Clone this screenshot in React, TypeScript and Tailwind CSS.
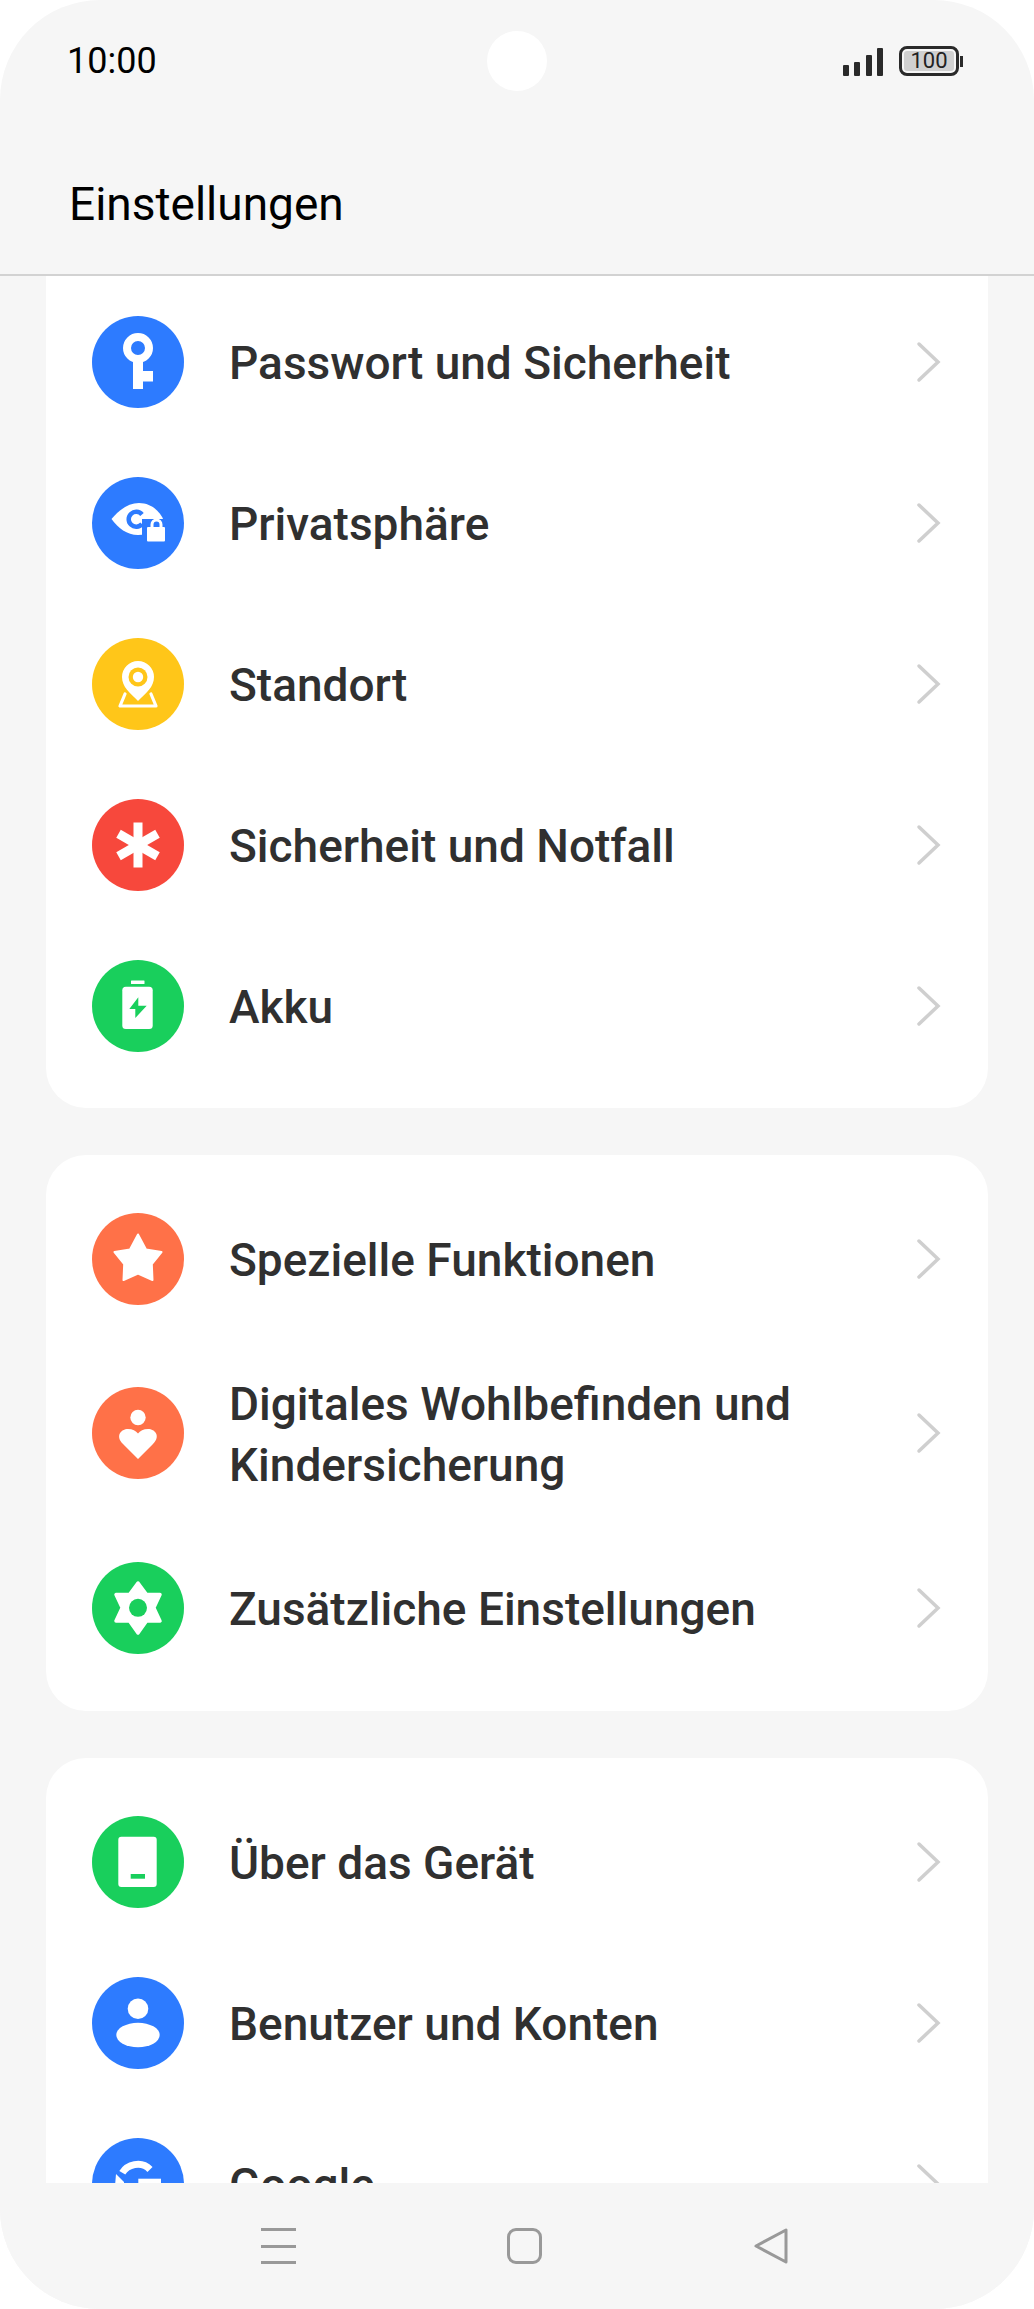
const Circle = ({ color, children }: { color: string; children: React.ReactNode }) => (
  <svg width="92" height="92" viewBox="0 0 92 92" className="shrink-0">
    <circle cx="46" cy="46" r="46" fill={color} />
    {children}
  </svg>
);
const BLUE = "#2d7bff", YELLOW = "#ffc619", RED = "#f7483c", GREEN = "#19cf5c", ORANGE = "#ff7148";

const Key = () => (
  <Circle color={BLUE}>
    <circle cx="46" cy="32" r="11" fill="none" stroke="#fff" strokeWidth="8" />
    <path d="M41 44h10v11h10v10.500H51V73H41z" fill="#fff" />
  </Circle>
);
const Eye = () => (
  <Circle color={BLUE}>
    <path d="M19.500 42C28 32 37 26 47 26c12 0 21 8 25 18-5 8-15 14-26 14-11 0-20-7-26.500-16z" fill="#fff" />
    <path d="M50 37.500A7.500 7.500 0 1 0 50 47" fill="none" stroke={BLUE} strokeWidth="4.500" />
    <rect x="50" y="42" width="28" height="26" fill={BLUE} />
    <path d="M60 50v-2.500a4.500 4.500 0 0 1 9 0V50" fill="none" stroke="#fff" strokeWidth="3" />
    <rect x="55" y="50" width="18" height="14.500" rx="1" fill="#fff" />
  </Circle>
);
const Pin = () => (
  <Circle color={YELLOW}>
    <path d="M33 56l-5 12h36l-5-12" fill="none" stroke="#fff" strokeWidth="3.200" strokeLinejoin="round" strokeLinecap="round" />
    <path d="M46 63C38 55 30 49 30 39a16 16 0 0 1 32 0c0 10-8 16-16 24z" fill="#fff" />
    <circle cx="46" cy="39" r="9.500" fill={YELLOW} />
    <circle cx="46" cy="39" r="5.200" fill="#fff" />
  </Circle>
);
const Star6 = () => (
  <Circle color={RED}>
    <rect x="41.500" y="23.500" width="9" height="45" fill="#fff" />
    <rect x="41.500" y="23.500" width="9" height="45" fill="#fff" transform="rotate(60 46 46)" />
    <rect x="41.500" y="23.500" width="9" height="45" fill="#fff" transform="rotate(-60 46 46)" />
  </Circle>
);
const Battery = () => (
  <Circle color={GREEN}>
    <rect x="39" y="20.500" width="13.500" height="3.500" rx="0.500" fill="#fff" />
    <rect x="30.300" y="26.700" width="30.400" height="42.300" rx="3.500" fill="#fff" />
    <path d="M46.300 37.300L37.300 49h6v9l11.400-12.300h-8.400z" fill={GREEN} />
  </Circle>
);
const StarI = () => (
  <Circle color={ORANGE}>
    <path d="M46 21.500L54 36.500 69.500 39 59.800 51 60.500 67 46 60.500 31.500 67 32.200 51 22.500 39 38 36.500z" fill="#fff" stroke="#fff" strokeWidth="2" strokeLinejoin="round" />
  </Circle>
);
const Heart = () => (
  <Circle color={ORANGE}>
    <circle cx="46" cy="30.500" r="7.700" fill="#fff" />
    <path d="M46 72L31 57c-8-8-2-15 5-15 4.500 0 8 2 10 4.500 2-2.500 5.500-4.500 10-4.500 7 0 13 7 5 15z" fill="#fff" />
  </Circle>
);
const Gear = () => (
  <Circle color={GREEN}>
    <path d="M46 21L54.500 32.500H68L61.800 45.800 68 59H54.500L46 71 37.500 59H24L30.200 45.800 24 32.500H37.500z" fill="#fff" stroke="#fff" strokeWidth="3.500" strokeLinejoin="round" />
    <circle cx="46" cy="45.800" r="9" fill={GREEN} />
  </Circle>
);
const Tablet = () => (
  <Circle color={GREEN}>
    <rect x="26.300" y="20.700" width="38.400" height="50.300" rx="3" fill="#fff" />
    <rect x="38.700" y="58" width="14.300" height="4.700" fill={GREEN} />
  </Circle>
);
const User = () => (
  <Circle color={BLUE}>
    <circle cx="46" cy="31.700" r="10.300" fill="#fff" />
    <ellipse cx="46" cy="58" rx="21.700" ry="12.300" fill="#fff" />
  </Circle>
);
const GoogleI = () => (
  <Circle color={BLUE}>
    <path d="M30.300 34.700C35 27 49 22 58 31.500" fill="none" stroke="#fff" strokeWidth="7" />
    <path d="M24 36l8 8v4H23z" fill="#fff" />
    <path d="M46.300 40.700H69V60H46.300z" fill="#fff" />
  </Circle>
);

const Row = ({ icon, label, tall }: { icon: React.ReactNode; label: React.ReactNode; tall?: boolean }) => (
  <div className={`flex items-center pl-[46px] pr-[46px] ${tall ? "h-[188px]" : "h-[161px]"}`}>
    {icon}
    <div className="ml-[45px] flex-1 pt-[3px] text-[#303030] text-[46px] leading-[61px] font-medium [font-family:Roboto,sans-serif]">{label}</div>
    <svg width="26" height="42" viewBox="0 0 26 42" className="shrink-0">
      <path d="M3 3l19 18L3 39" fill="none" stroke="#cfcfcf" strokeWidth="3.500" strokeLinecap="round" strokeLinejoin="miter" />
    </svg>
  </div>
);

export default function App() {
  return (
    <div className="w-[1034px] h-[2309px] bg-white">
      <div className="w-full h-full bg-[#f6f6f6] rounded-[100px] overflow-hidden flex flex-col [font-family:Roboto,sans-serif]">
        <header className="h-[276px] shrink-0 border-b-2 border-[#d2d2d2] relative">
          <div className="flex justify-between items-center pl-[67px] pr-[71px] pt-[36px] h-[86px]">
            <span className="text-[36px] leading-[50px] text-black">10:00</span>
            <div className="flex items-center gap-[16px]">
              <div className="flex items-end gap-[5.500px] h-[29px]">
                <span className="w-[6px] h-[11px] bg-[#2a2a2a] rounded-[1px]" />
                <span className="w-[6px] h-[14px] bg-[#2a2a2a] rounded-[1px]" />
                <span className="w-[6px] h-[21px] bg-[#2a2a2a] rounded-[1px]" />
                <span className="w-[6px] h-[28px] bg-[#2a2a2a] rounded-[1px]" />
              </div>
              <div className="flex items-center gap-[1px]">
                <div className="w-[60px] h-[30px] border-[3px] border-[#2a2a2a] rounded-[8px] p-[2px]">
                  <div className="w-full h-full bg-[#d0d0d0] rounded-[3px] flex items-center justify-center text-[22px] leading-none text-[#222]">100</div>
                </div>
                <span className="w-[3px] h-[11px] bg-[#2a2a2a]" />
              </div>
            </div>
          </div>
          <div className="absolute left-[487px] top-[31px] w-[60px] h-[60px] rounded-full bg-white" />
          <h1 className="mt-[88px] ml-[69px] text-[46px] leading-[60px] font-normal text-black">Einstellungen</h1>
        </header>
        <main className="flex-1 min-h-0 overflow-hidden px-[46px] flex flex-col gap-[47px]">
          <section className="bg-white rounded-b-[40px] pt-[5px] pb-[22px] shrink-0">
            <Row icon={<Key />} label="Passwort und Sicherheit" />
            <Row icon={<Eye />} label="Privatsphäre" />
            <Row icon={<Pin />} label="Standort" />
            <Row icon={<Star6 />} label="Sicherheit und Notfall" />
            <Row icon={<Battery />} label="Akku" />
          </section>
          <section className="bg-white rounded-[40px] py-[23px] shrink-0">
            <Row icon={<StarI />} label="Spezielle Funktionen" />
            <Row tall icon={<Heart />} label={<>Digitales Wohlbefinden und<br />Kindersicherung</>} />
            <Row icon={<Gear />} label="Zusätzliche Einstellungen" />
          </section>
          <section className="bg-white rounded-t-[40px] pt-[23px] shrink-0">
            <Row icon={<Tablet />} label="Über das Gerät" />
            <Row icon={<User />} label="Benutzer und Konten" />
            <Row icon={<GoogleI />} label="Google" />
          </section>
        </main>
        <footer className="h-[126px] shrink-0 bg-[#f6f6f6] relative flex items-start justify-center pt-[44px] pl-[16px]">
          <div className="flex items-center gap-[211px] h-[38px]">
            <div className="w-[35px] h-[36px] flex flex-col justify-between">
              <span className="h-[3px] bg-[#999]" />
              <span className="h-[3px] bg-[#999]" />
              <span className="h-[3px] bg-[#999]" />
            </div>
            <div className="w-[35px] h-[36px] border-[3px] border-[#999] rounded-[9px]" />
            <svg width="36" height="36" viewBox="0 0 36 36">
              <path d="M33 2v32L3 18z" fill="none" stroke="#999" strokeWidth="3" strokeLinejoin="round" />
            </svg>
          </div>
        </footer>
      </div>
    </div>
  );
}
